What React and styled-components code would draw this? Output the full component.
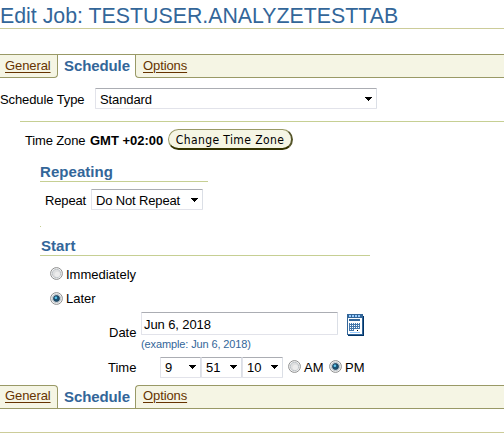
import React from "react";
import styled, { createGlobalStyle, css } from "styled-components";

const GlobalStyle = createGlobalStyle`
  * { box-sizing: border-box; }
  body {
    margin: 0;
    overflow: hidden;
    background: #fff;
    color: #000;
    font: 13px/16px "Liberation Sans", Arial, sans-serif;
    white-space: nowrap;
  }
`;

const Page = styled.main`
  width: 504px;
  height: 442px;
  display: flex;
  flex-direction: column;
`;

const Title = styled.h1`
  margin: 0 0 25px;
  height: 29px;
  padding-top: 4px;
  border-bottom: 1px solid #cccc99;
  color: #336699;
  font-size: 21.33px;
  font-weight: 400;
  line-height: 24px;
`;

const olive = "#999966";
const moss = "#c6cf93";

const TabBar = styled.nav`
  display: flex;
  flex: none;
  height: 24px;
  ${(p) => (p.$bottom ? `border-bottom: 1px solid ${olive};` : `border-top: 1px solid ${olive};`)}
`;

const Tab = styled.div`
  width: ${(p) => (p.$last ? "auto" : "58px")};
  flex: ${(p) => (p.$last ? 1 : "none")};
  padding: ${(p) => (p.$bottom ? "2px" : "3px")} 0 0 ${(p) => (p.$last ? 7 : 5)}px;
  background: #f5f5e4;
  ${(p) => (p.$bottom ? "border-top" : "border-bottom")}: 1px solid ${olive};
  ${(p) => (p.$last ? "border-left" : "border-right")}: 1px solid ${olive};
  ${(p) => {
    const v = p.$bottom ? "top" : "bottom";
    return `border-${v}-${p.$last ? "left" : "right"}-radius: 4px;`;
  }}
`;

const TabLink = styled.a`
  color: #663300;
  text-decoration: underline;
  text-underline-offset: 2px;
  letter-spacing: -0.1px;
`;

const CurrentTab = styled.div`
  width: 77px;
  padding: ${(p) => (p.$bottom ? "3px" : "2px")} 0 0 6px;
  color: #336699;
  font-size: 15px;
  font-weight: 700;
  line-height: 18px;
  letter-spacing: -0.1px;
`;

const Row = styled.div`
  display: flex;
  flex: none;
  align-items: ${(p) => p.$align || "center"};
  height: ${(p) => p.$h}px;
  margin-top: ${(p) => p.$top || 0}px;
  padding-left: ${(p) => p.$left || 0}px;
`;

const Label = styled.span`
  flex: none;
  width: ${(p) => (p.$w ? `${p.$w}px` : "auto")};
  letter-spacing: ${(p) => p.$track || 0}px;
  padding-top: ${(p) => p.$drop || 0}px;
`;

const fieldFrame = css`
  border: 1px solid #e2e3ea;
  border-top-color: #abadb3;
  border-right-color: #dbdfe6;
  border-radius: 1px;
  background: #fff;
`;

const SelectBox = styled.div`
  ${fieldFrame}
  display: flex;
  flex: none;
  align-items: center;
  justify-content: space-between;
  width: ${(p) => p.$w}px;
  height: 21px;
  padding: ${(p) => (p.$raised ? 0 : 2)}px 4px 0 4px;
  letter-spacing: ${(p) => p.$track || 0}px;
`;

const Arrow = styled.svg`
  width: 7px;
  height: 4px;
  margin-bottom: 1px;
`;

const DateInput = styled.div`
  ${fieldFrame}
  width: 197px;
  height: 23px;
  padding: 4px 0 0 2px;
  letter-spacing: -0.1px;
`;

const Divider = styled.hr`
  flex: none;
  width: 484px;
  height: 1px;
  margin: 12px 0 0 20px;
  border: 0;
  background: ${moss};
`;

const PillButton = styled.button`
  width: 125px;
  height: 21px;
  padding: 1px 0 0;
  border: 1px solid #999966;
  border-right: 2px solid #55552a;
  border-bottom: 2px solid #333300;
  border-radius: 11px;
  background: #f5f5e4;
  color: #000;
  font: 12px/16px "DejaVu Sans Condensed", "DejaVu Sans", sans-serif;
  font-stretch: condensed;
  letter-spacing: 0.4px;
`;

const SectionTitle = styled.h2`
  flex: none;
  width: ${(p) => p.$w}px;
  height: 20px;
  margin: ${(p) => p.$top}px 0 0 40px;
  padding-left: ${(p) => p.$inset || 0}px;
  border-bottom: 1px solid ${moss};
  color: #336699;
  font-size: 15px;
  line-height: 20px;
  letter-spacing: 0.05px;
`;

const Speck = styled.div`
  flex: none;
  width: 1px;
  height: 1px;
  margin: 16px 0 0 40px;
  background: ${moss};
`;

const Hint = styled.div`
  flex: none;
  height: 14px;
  margin: 2px 0 0 141px;
  color: #336699;
  font-size: 11px;
  line-height: 14px;
  letter-spacing: -0.12px;
`;

const RadioSvg = styled.svg`
  flex: none;
  width: 13px;
  height: 13px;
  margin: 0 3px ${(p) => p.$lift || 0}px ${(p) => p.$left || 0}px;
`;

const Calendar = styled.svg`
  flex: none;
  width: 17px;
  height: 22px;
  margin: 2px 0 0 9px;
`;

const Closing = styled.div`
  flex: none;
  height: 24px;
  border-bottom: 1px solid #cccc99;
`;

function Select({ children, ...rest }) {
  return (
    <SelectBox {...rest}>
      <span>{children}</span>
      <Arrow viewBox="0 0 7 4" shapeRendering="crispEdges">
        <path d="M0 0h7v1H6v1H5v1H4v1H3V3H2V2H1V1H0z" />
      </Arrow>
    </SelectBox>
  );
}

function Radio({ checked, left, lift }) {
  return (
    <RadioSvg $left={left} $lift={lift} viewBox="0 0 13 13">
      <circle cx="6.5" cy="6.5" r="5.9" fill="#f4f4f4" stroke="#8e8f8f" strokeWidth="1" />
      <circle cx="6.5" cy="6.5" r="4.2" fill={checked ? "#d8e2e8" : "#dedfe0"} stroke="#b5bbc0" strokeWidth=".8" />
      {checked ? (
        <>
          <circle cx="6.5" cy="6.5" r="3" fill="#1b5273" stroke="#193b55" strokeWidth=".8" />
          <circle cx="5.9" cy="5.7" r="1.3" fill="#5fc7ee" />
        </>
      ) : (
        <circle cx="7.3" cy="7.3" r="2.6" fill="#ececec" />
      )}
    </RadioSvg>
  );
}

function CalendarIcon() {
  const dots = [];
  for (let y = 0; y < 4; y++)
    for (let x = 0; x < (y === 3 ? 2 : 5); x++)
      dots.push(<path key={`${x}-${y}`} d={`M${3 + x * 2} ${9 + y * 2}h1v1h-1z`} fill="#fff" />);
  return (
    <Calendar viewBox="0 0 17 22" shapeRendering="crispEdges">
      <path d="M0 0h16v2h1v20H1v-1H0z" fill="#336699" />
      <path d="M16 2h1v20H1v-1h15z" fill="#003366" />
      <path d="M1 4h14v16H1z" fill="#fff" />
      <path d="M2 1h2v2H2zM5 1h2v2H5zM8 1h2v2H8zM11 1h2v2h-2z" fill="#99ccff" />
      <path d="M2 5h11v2H2z" fill="#336699" />
      <path d="M2 9h11v6H2zM2 15h5v2H2z" fill="#4477aa" />
      {dots}
      <path d="M10 16h1v1h-1z" fill="#000" />
      <path d="M3 18h10v1H3z" fill="#99ccff" />
    </Calendar>
  );
}

function Tabs({ bottom }) {
  return (
    <TabBar $bottom={bottom}>
      <Tab $bottom={bottom}>
        <TabLink>General</TabLink>
      </Tab>
      <CurrentTab $bottom={bottom}>Schedule</CurrentTab>
      <Tab $bottom={bottom} $last>
        <TabLink>Options</TabLink>
      </Tab>
    </TabBar>
  );
}

export default function App() {
  return (
    <Page>
      <GlobalStyle />
      <Title>Edit Job: TESTUSER.ANALYZETESTTAB</Title>
      <Tabs />
      <Row $h={21} $top={10}>
        <Label $w={95} $drop={2} $track={-0.1}>Schedule Type</Label>
        <Select $w={282} $track={-0.1}>Standard</Select>
      </Row>
      <Divider />
      <Row $h={21} $top={7} $left={25}>
        <Label $w={65} $drop={2} $track={-0.15}>Time Zone</Label>
        <Label as="b" $w={78} $drop={2}>GMT +02:00</Label>
        <PillButton>Change Time Zone</PillButton>
      </Row>
      <SectionTitle $w={168} $top={12}>Repeating</SectionTitle>
      <Row $h={21} $top={7} $left={45}>
        <Label $w={46} $drop={2} $track={-0.15}>Repeat</Label>
        <Select $w={112} $track={-0.15}>Do Not Repeat</Select>
      </Row>
      <Speck />
      <SectionTitle $w={330} $top={9} $inset={1}>Start</SectionTitle>
      <Row $h={16} $top={10} $left={50}>
        <Radio lift={2} />
        <Label $drop={1}>Immediately</Label>
      </Row>
      <Row $h={16} $top={9} $left={50}>
        <Radio checked lift={2} />
        <Label>Later</Label>
      </Row>
      <Row $h={23} $top={5} $left={109} $align="flex-start">
        <Label $w={32} $drop={13}>Date</Label>
        <DateInput>Jun 6, 2018</DateInput>
        <CalendarIcon />
      </Row>
      <Hint>(example: Jun 6, 2018)</Hint>
      <Row $h={21} $top={6} $left={108}>
        <Label $w={52}>Time</Label>
        <Select $w={41} $raised>9</Select>
        <Select $w={41} $raised>51</Select>
        <Select $w={41} $raised>10</Select>
        <Radio left={5} lift={2} />
        <Label $w={25}>AM</Label>
        <Radio checked lift={2} />
        <Label>PM</Label>
      </Row>
      <Row $h={7} />
      <Tabs bottom />
      <Closing />
    </Page>
  );
}
